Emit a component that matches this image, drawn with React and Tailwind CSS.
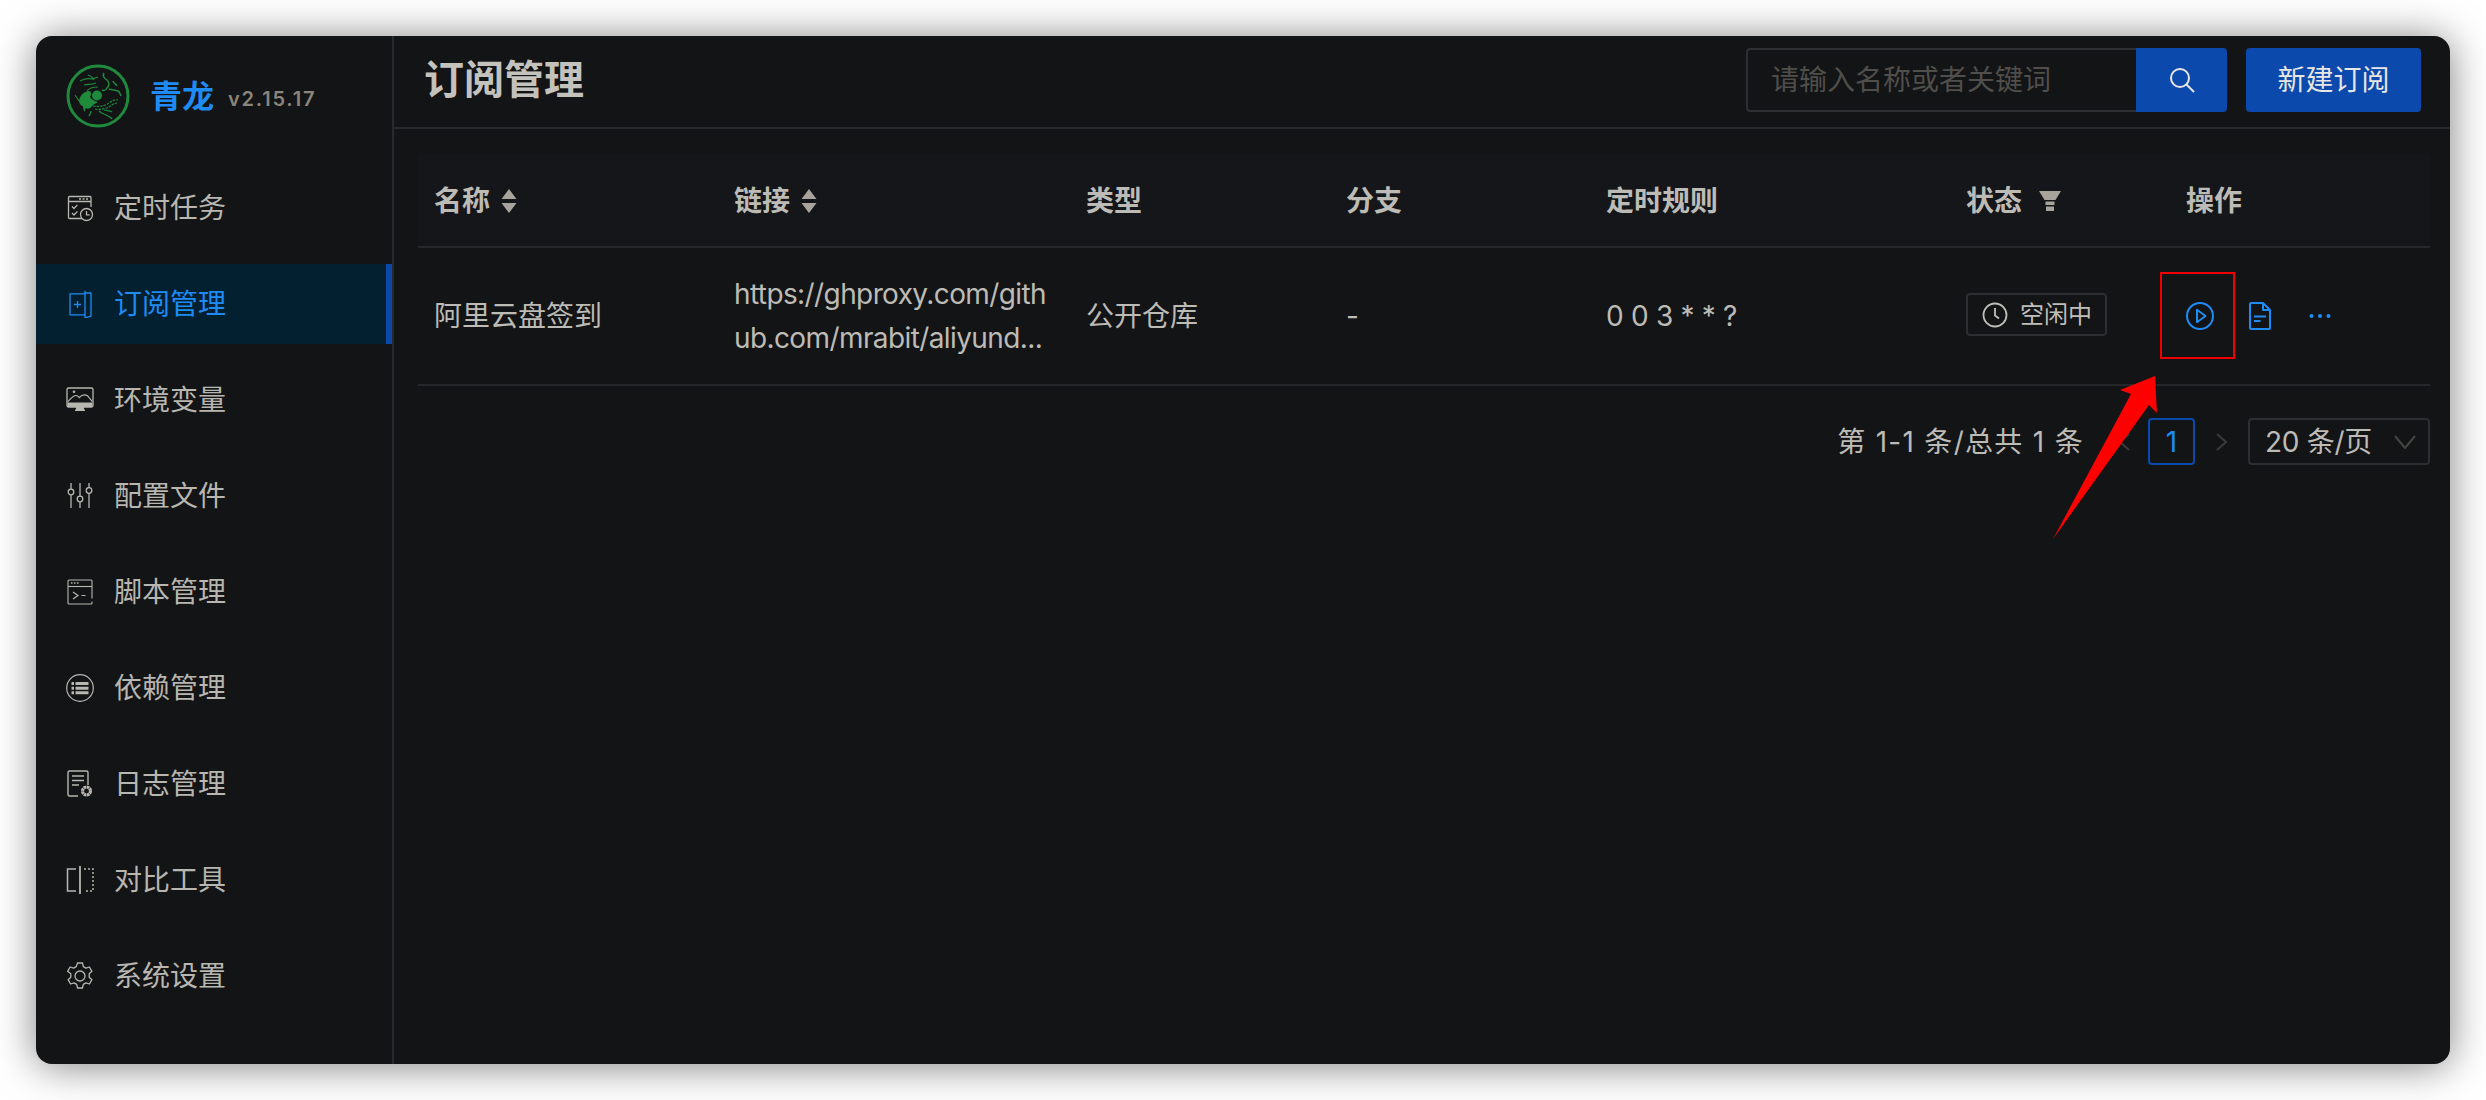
import React from 'react';

const FONT = { fontFamily: 'Inter, "Noto Sans CJK SC", sans-serif' };

// Sidebar icons, all on a 28 box
const IconTask = () => (
  <svg width="28" height="28" viewBox="0 0 28 28" fill="none" stroke="currentColor" strokeWidth="1.3">
    <path d="M25 13V3.500a1 1 0 0 0-1-1H3.500a1 1 0 0 0-1 1v20a1 1 0 0 0 1 1H16" />
    <path d="M2.500 7.500H25" />
    <path d="M13 5h2M16.500 5h2M20 5h2" strokeWidth="1.500" />
    <path d="M6 12.500l2 2 3.400-3.600M6 19l2 2 3.400-3.600" />
    <circle cx="20.500" cy="20.500" r="6" />
    <path d="M20.500 17v3.800h3.200" />
  </svg>
);
const IconDoor = () => (
  <svg width="28" height="28" viewBox="0 0 28 28" fill="none" stroke="currentColor" strokeWidth="1.3" strokeLinejoin="round">
    <path d="M19 3.800H4v21H19" />
    <path d="M19 .8v27l6-1.600V3H19" />
    <path d="M8 14.500h7M11.500 11v7" />
  </svg>
);
const IconEnv = () => (
  <svg width="28" height="28" viewBox="0 0 28 28" fill="none">
    <path d="M1 3.500A1.500 1.500 0 0 1 2.500 2h23A1.500 1.500 0 0 1 27 3.500v16a1.500 1.500 0 0 1-1.500 1.500h-23A1.500 1.500 0 0 1 1 19.500z" stroke="currentColor" strokeWidth="1.300" />
    <path d="M2 15.500c3-3 5-6 8-6 2 0 3 1.500 3.500 2 2.500-3.500 7.500-3.500 9.500 0 1.200 1.500 2.500 3 3 4" stroke="currentColor" strokeWidth="1.200" />
    <path d="M1.500 16.500h25V21h-25z" fill="currentColor" />
    <circle cx="8" cy="5.800" r="1.300" fill="currentColor" />
    <path d="M10 21h8v2.500h-8zM9 23.500h10V25H9z" fill="currentColor" />
  </svg>
);
const IconSliders = () => (
  <svg width="28" height="28" viewBox="0 0 28 28" fill="none" stroke="currentColor" strokeWidth="1.3">
    <path d="M5 1v6.500M5 13v13M14 1v13.500M14 20v6M23 1v5M23 11.500V26" />
    <circle cx="5" cy="10" r="2.800" />
    <circle cx="14" cy="17" r="2.800" />
    <circle cx="23" cy="8.500" r="2.800" />
  </svg>
);
const IconScript = () => (
  <svg width="28" height="28" viewBox="0 0 28 28" fill="none" stroke="currentColor" strokeWidth="1.100">
    <path d="M26 20.500V3a1 1 0 0 0-1-1H3a1 1 0 0 0-1 1v22a1 1 0 0 0 1 1h22a1 1 0 0 0 1-1v-1.500" />
    <path d="M2 8.500h24" />
    <path d="M5 5h1.500M8 5h1.500M11 5h1.500" strokeWidth="1.600" />
    <path d="M7 14l5 3.500-5 3.500M15.500 17.500h4" strokeWidth="1.200" />
  </svg>
);
const IconDeps = () => (
  <svg width="28" height="28" viewBox="0 0 28 28" fill="none">
    <circle cx="14" cy="14" r="13.300" stroke="currentColor" strokeWidth="1.200" />
    <path d="M9.500 8h13v3h-13zM9.500 12.700h13v3h-13zM9.500 17.300h13v3h-13zM5.500 8h2.500v3H5.500zM5.500 12.700h2.500v3H5.500zM5.500 17.300h2.500v3H5.500z" fill="currentColor" />
  </svg>
);
const IconLog = () => (
  <svg width="28" height="28" viewBox="0 0 28 28" fill="none">
    <path d="M12 26H3.500A1.500 1.500 0 0 1 2 24.500v-22A1.500 1.500 0 0 1 3.500 1h17A1.500 1.500 0 0 1 22 2.500V15" stroke="currentColor" strokeWidth="1.400" />
    <path d="M6 6h12M6 10.500h12M6 15h7" stroke="currentColor" strokeWidth="1.300" />
    <circle cx="20.500" cy="21" r="4" stroke="currentColor" strokeWidth="3.200" strokeDasharray="2.600 0.500" />
  </svg>
);
const IconDiff = () => (
  <svg width="28" height="28" viewBox="0 0 28 28" fill="none" stroke="currentColor">
    <path d="M10 3H1.500v22H10" strokeWidth="1.500" />
    <path d="M14 0v28" strokeWidth="1.800" />
    <path d="M18 3h9v22h-9" strokeWidth="1.500" strokeDasharray="2 2" />
  </svg>
);
const IconGear = () => (
  <svg width="28" height="28" viewBox="0 0 28 28" fill="none" stroke="currentColor" strokeWidth="1.300" strokeLinejoin="round">
    <path d="M11.500 1h5l.8 3.600 2.600 1.500 3.500-1.100 2.500 4.300-2.700 2.500v3.400l2.700 2.500-2.500 4.300-3.500-1.100-2.600 1.500-.8 3.600h-5l-.8-3.600-2.600-1.500-3.500 1.100-2.500-4.300 2.700-2.500v-3.400L1.600 9.300 4.100 5l3.500 1.100 2.600-1.500z" />
    <circle cx="14" cy="14" r="5" />
  </svg>
);

const Logo = () => (
  <svg width="64" height="64" viewBox="0 0 64 64" fill="none" stroke="#1f8a3c">
    <circle cx="32" cy="32" r="30" strokeWidth="3" />
    <circle cx="31" cy="31.500" r="5" fill="#1f8a3c" stroke="none" />
    <path d="M13 38c0-6 5-11 10-11 2 0 3 3 1 6 2 3 5 4 8 5l-5 3c-2 3-5 5-7 3-1 1-1 3-1 4-2-2-2-4-2-6-2 0-3-2-4-4z" fill="#1f8a3c" stroke="none" />
    <path d="M14 17c4-2 8-3 12-2l6-2M18 21c4-1 8 0 12-2M22 11c3 1 5 3 6 5M32 23c-5 0-9 1-11 4M9 31l4 6" strokeWidth="1.200" />
    <path d="M38 9c-2 3 0 5 3 7 3 3 2 6 0 8-1 2-3 3-5 2M43 25c3 1 6 1 9 2 2 1 2 3 3 5M47 17c1 3 3 3 4 5" strokeWidth="1.500" />
    <path d="M27 42c6 1 12 0 16-3 3-2 6-4 9-3M29 45c5 1 10 0 14-2 3-2 5-4 8-4" strokeWidth="1.200" strokeDasharray="2.500 1" />
    <path d="M33 47c3 3 6 3 9 5 2 1 3 1 4 3M38 46c3 1 6 0 8 2M25 47c0 2-1 3-2 5" strokeWidth="1.300" />
  </svg>
);

const NAV = [
  { label: '定时任务', icon: IconTask },
  { label: '订阅管理', icon: IconDoor, active: true },
  { label: '环境变量', icon: IconEnv },
  { label: '配置文件', icon: IconSliders },
  { label: '脚本管理', icon: IconScript },
  { label: '依赖管理', icon: IconDeps },
  { label: '日志管理', icon: IconLog },
  { label: '对比工具', icon: IconDiff },
  { label: '系统设置', icon: IconGear },
];

const SortCaret = () => (
  <svg width="16" height="26" viewBox="0 0 16 26" className="text-[#a9a49b] shrink-0">
    <path d="M8 1l7.500 10H.5zM8 25L.5 15h15z" fill="currentColor" />
  </svg>
);

const FilterIcon = () => (
  <svg width="22" height="20" viewBox="0 0 22 20" className="text-[#a9a49b] ml-[6px]">
    <path d="M0 0h22l-5.500 9h-11zM6.500 10.500h9V14h-9zM7 15.500h8V20H7z" fill="currentColor" />
  </svg>
);

const HEADS = [
  { label: '名称', sort: true, first: true },
  { label: '链接', sort: true },
  { label: '类型' },
  { label: '分支' },
  { label: '定时规则' },
  { label: '状态', filter: true },
  { label: '操作' },
];

const GRID = 'grid grid-cols-[299px_352px_260px_260px_360px_220px_261px]';

export default function App() {
  return (
    <div className="relative bg-white w-[2486px] h-[1100px] p-[36px] overflow-hidden" style={FONT}>
      <div className="flex h-[1028px] bg-[#131416] rounded-[16px] overflow-hidden shadow-[0_2px_40px_rgba(0,0,0,0.5)]">
        {/* Sidebar */}
        <aside className="w-[358px] shrink-0 border-r-2 border-[#28292c]">
          <div className="h-[132px] flex items-center pl-[30px] pb-[12px]">
            <Logo />
            <span className="ml-[20px] mt-[1px] text-[32px] leading-none font-bold text-[#1f8bf5]">青龙</span>
            <span className="ml-[14px] mt-[6px] text-[20px] leading-none font-semibold tracking-[1.800px] text-[#8a857c]">v2.15.17</span>
          </div>
          <nav className="flex flex-col gap-[16px]">
            {NAV.map((item) => (
              <div
                key={item.label}
                className={`h-[80px] flex items-center gap-[20px] pl-[30px] text-[28px] ${
                  item.active
                    ? 'bg-[#032030] text-[#1f8bf5] border-r-[6px] border-[#0b49a8]'
                    : 'text-[#b8b6b0]'
                }`}
              >
                <item.icon />
                <span>{item.label}</span>
              </div>
            ))}
          </nav>
        </aside>

        {/* Main */}
        <main className="flex-1 min-w-0">
          <header className="h-[93px] border-b-2 border-[#28292c] flex justify-between pl-[30px] pr-[29px] pt-[12px]">
            <h1 className="text-[40px] leading-[60px] font-bold text-[#c4c2bc] mt-[2px]">订阅管理</h1>
            <div className="flex gap-[19px]">
              <div className="flex h-[64px] w-[481px]">
                <div className="flex-1 border-2 border-r-0 border-[#2d2e31] rounded-l-[4px] pl-[23px] flex items-center text-[28px] text-[#4f4e4b]">
                  请输入名称或者关键词
                </div>
                <button className="w-[91px] bg-[#0b49ad] rounded-r-[4px] flex items-center justify-center text-[#e8e6e3]">
                  <svg width="26" height="26" viewBox="0 0 26 26" fill="none" stroke="currentColor" strokeWidth="2">
                    <circle cx="11" cy="11" r="9" />
                    <path d="M17.500 17.500L25 25" />
                  </svg>
                </button>
              </div>
              <button className="w-[175px] h-[64px] bg-[#0b49ad] rounded-[4px] text-[28px] text-[#e8e6e3]">新建订阅</button>
            </div>
          </header>

          <div className="pt-[26px] pl-[24px] pr-[20px]">
            {/* Table */}
            <div className={`${GRID} h-[93px] bg-[#15161a] border-b-2 border-[#26272a] text-[28px] font-semibold text-[#bdbbb5]`}>
              {HEADS.map((h) => (
                <div key={h.label} className={`flex items-center gap-[11px] pr-[17px] ${h.first ? 'pl-[16px]' : 'pl-[17px]'}`}>
                  <span>{h.label}</span>
                  {h.sort && <SortCaret />}
                  {h.filter && <FilterIcon />}
                </div>
              ))}
            </div>
            <div className={`${GRID} h-[138px] border-b-2 border-[#26272a] text-[28px] text-[#bdbbb5] items-center`}>
              <div className="pl-[16px] pr-[17px]">阿里云盘签到</div>
              <div className="px-[17px] leading-[44px] break-all tracking-[-0.6px]">
                https://ghproxy.com/github.com/mrabit/aliyund...
              </div>
              <div className="px-[17px]">公开仓库</div>
              <div className="px-[17px]">-</div>
              <div className="px-[17px] tracking-[-0.3px]">0 0 3 * * ?</div>
              <div className="pl-[17px]">
                <span className="inline-flex items-center gap-[12px] w-[141px] h-[43px] pl-[14px] border-2 border-[#2d2e31] rounded-[4px] text-[24px] text-[#c0beb8]">
                  <svg width="26" height="26" viewBox="0 0 26 26" fill="none" stroke="currentColor" strokeWidth="1.800">
                    <circle cx="13" cy="13" r="11.500" />
                    <path d="M13 6v7.500l4 3" />
                  </svg>
                  空闲中
                </span>
              </div>
              <div className="flex items-center pl-[17px] text-[#1f8bf5]">
                <svg width="28" height="28" viewBox="0 0 28 28" fill="none" stroke="currentColor" strokeWidth="2">
                  <circle cx="14" cy="14" r="13" />
                  <path d="M11 7.800l8.500 6.200-8.500 6.200z" strokeLinejoin="round" />
                </svg>
                <svg width="22" height="28" viewBox="0 0 22 28" fill="none" stroke="currentColor" strokeWidth="2" className="ml-[35px]" strokeLinejoin="round">
                  <path d="M1 2a1 1 0 0 1 1-1h12l7 7v18a1 1 0 0 1-1 1H2a1 1 0 0 1-1-1z" />
                  <path d="M14 1v7h7M5 14.500h12M5 19h6.500" />
                </svg>
                <svg width="22" height="6" viewBox="0 0 22 6" fill="currentColor" className="ml-[38px]">
                  <circle cx="2.500" cy="3" r="2" />
                  <circle cx="11" cy="3" r="2" />
                  <circle cx="19.500" cy="3" r="2" />
                </svg>
              </div>
            </div>

            {/* Pagination */}
            <div className="mt-[32px] h-[47px] flex items-center justify-end text-[28px] text-[#bdbbb5]">
              <span className="mr-[16px] tracking-[1.300px]">第 1-1 条/总共 1 条</span>
              <div className="w-[48px] flex justify-center text-[#3a3a3c]">
                <svg width="12" height="18" viewBox="0 0 12 18" fill="none" stroke="currentColor" strokeWidth="2"><path d="M11 1L2 9l9 8" /></svg>
              </div>
              <div className="w-[47px] h-[47px] border-2 border-[#0b49ad] rounded-[4px] flex items-center justify-center text-[#1f8bf5]">1</div>
              <div className="w-[53px] flex justify-center text-[#3a3a3c]">
                <svg width="12" height="18" viewBox="0 0 12 18" fill="none" stroke="currentColor" strokeWidth="2"><path d="M1 1l9 8-9 8" /></svg>
              </div>
              <div className="w-[182px] h-[47px] border-2 border-[#2d2e31] rounded-[4px] flex items-center justify-between pl-[15px] pr-[12px]">
                <span className="tracking-[-0.3px]">20 条/页</span>
                <svg width="22" height="14" viewBox="0 0 22 14" fill="none" stroke="#45453f" strokeWidth="2"><path d="M1 1l10 12L21 1" /></svg>
              </div>
            </div>
          </div>
        </main>
      </div>

      {/* Red annotation laid over the screenshot */}
      <div className="absolute left-[2160px] top-[272px] w-[75px] h-[87px] border-2 border-[#f00000]" />
      <svg className="absolute left-0 top-0" width="2486" height="1100" viewBox="0 0 2486 1100">
        <path d="M2155 376L2120 390L2131 394L2053 539L2149 405L2157 413z" fill="#fe0000" />
      </svg>
    </div>
  );
}
